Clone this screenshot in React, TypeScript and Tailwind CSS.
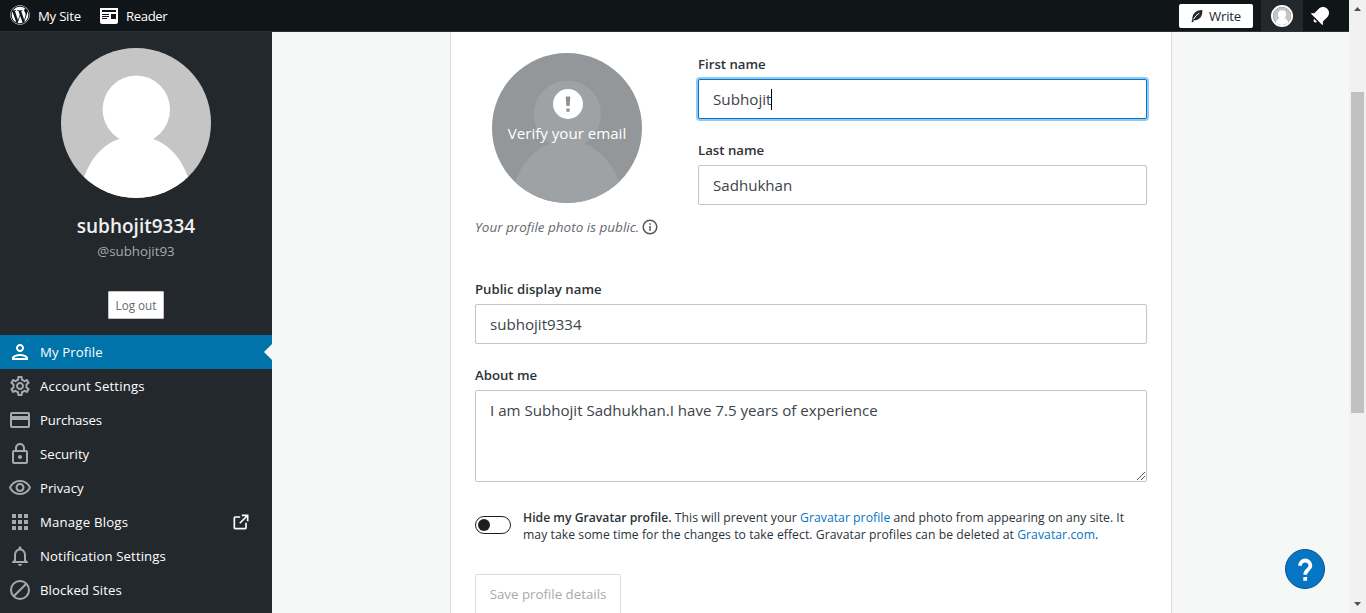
import React from "react";
import { FaWordpress } from "react-icons/fa";
import { MdOutlinePerson, MdOutlineSettings, MdOutlineLock, MdOutlineVisibility, MdApps, MdNotificationsNone } from "react-icons/md";

const CreditCard = () => (
  <svg viewBox="0 0 24 24" className="size-6" fill="currentColor">
    <path fillRule="evenodd" d="M4 4h16a2 2 0 0 1 2 2v12a2 2 0 0 1-2 2H4a2 2 0 0 1-2-2V6c0-1.100.9-2 2-2zm0 2h16v2H4zm0 6h16v6H4z" />
  </svg>
);

const Blocked = () => (
  <svg viewBox="0 0 24 24" className="size-6" fill="none" stroke="currentColor" strokeWidth="2">
    <circle cx="12" cy="12" r="9" />
    <path d="M5.700 18.300l12.600-12.600" />
  </svg>
);

const External = () => (
  <svg viewBox="0 0 24 24" className="size-5" fill="currentColor">
    <path d="M19 13v6c0 1.105-.895 2-2 2H5c-1.105 0-2-.895-2-2V7c0-1.105.895-2 2-2h6v2H5v12h12v-6h2zM13 3v2h4.586l-7.793 7.793 1.414 1.414L19 6.414V11h2V3h-8z" />
  </svg>
);

const Reader = () => (
  <svg viewBox="0 0 24 24" className="size-6" fill="currentColor">
    <path d="M3 4v14c0 1.100.9 2 2 2h14c1.100 0 2-.9 2-2V4H3zm7 11H5v-1h5v1zm2-2H5v-1h7v1zm0-2H5v-1h7v1zm7 4h-5v-5h5v5zm0-7H5V6h14v2z" />
  </svg>
);

const Quill = () => (
  <svg viewBox="0 0 12 14" className="h-[14px] w-3" fill="none">
    <path d="M11.300.9C6.500.7 1.200 3.700 1.300 10L.5 13l1.600.2.500-1.900C8.300 11.300 11.800 7.500 11.300.9Z" fill="#23282d" />
    <path d="M2.500 10.300Q4.500 6.500 8.300 4" stroke="#fff" strokeWidth="1" />
  </svg>
);

const Bell = () => (
  <svg viewBox="0 0 24 24" className="size-6" fill="#fff">
    <path d="M6.140 14.970l2.828 2.827c-.362.362-.862.586-1.414.586-1.105 0-2-.895-2-2 0-.552.224-1.052.586-1.413zm8.867 5.324L14.300 21 3 9.700l.706-.707 1.102.157c.754.108 1.690-.122 2.077-.510l3.885-3.884c2.340-2.340 6.135-2.340 8.475 0s2.340 6.135 0 8.475l-3.885 3.886c-.388.388-.618 1.323-.510 2.077l.157 1.100z" />
  </svg>
);

const Avatar = ({ className, back = "#c5c5c5", front = "#fff" }: { className: string; back?: string; front?: string }) => (
  <svg viewBox="0 0 150 150" className={className}>
    <defs>
      <clipPath id="avatar-clip"><circle cx="75" cy="75" r="75" /></clipPath>
    </defs>
    <g clipPath="url(#avatar-clip)">
      <rect width="150" height="150" fill={back} />
      <ellipse cx="75.300" cy="61.500" rx="33.700" ry="34" fill={front} />
      <path d="M20 150V140C27 108 48 88 75 88S123 108 130 140V150Z" fill={front} />
    </g>
  </svg>
);

const items = [
  { label: "My Profile", icon: <MdOutlinePerson size={24} />, track: "tracking-[0.1px]" },
  { label: "Account Settings", icon: <MdOutlineSettings size={24} />, track: "tracking-[0.16px]" },
  { label: "Purchases", icon: <CreditCard />, track: "tracking-[-0.15px]" },
  { label: "Security", icon: <MdOutlineLock size={24} />, track: "tracking-[0.02px]" },
  { label: "Privacy", icon: <MdOutlineVisibility size={24} />, track: "tracking-[0.02px]" },
  { label: "Manage Blogs", icon: <MdApps size={24} />, track: "tracking-[0.19px]" },
  { label: "Notification Settings", icon: <MdNotificationsNone size={24} />, track: "tracking-[0.11px]" },
  { label: "Blocked Sites", icon: <Blocked />, track: "tracking-[0.07px]" },
];

const labelCls = "block h-[21px] pt-px text-[13.200px] leading-[21px] font-semibold text-[#2c3338]";
const fieldCls = "flex h-10 items-center rounded-[2px] border border-[#c3c4c7] bg-white px-[14px] text-[15.100px] text-[#3c434a]";

function Masterbar() {
  return (
    <header className="flex h-8 shrink-0 items-center border-b border-[#2c3338] bg-[#101517] text-[13.200px] text-white">
      <div className="flex w-[97px] items-center pl-[10px]">
        <FaWordpress size={20} />
        <span className="ml-2 pt-[2px] tracking-[-0.25px]">My Site</span>
      </div>
      <div className="flex items-center gap-[5px]">
        <Reader />
        <span className="pt-[2px] tracking-[-0.4px]">Reader</span>
      </div>
      <div className="ml-auto flex h-full items-center">
        <div className="mr-2 flex h-6 w-[74px] items-center rounded-[2px] bg-white pl-3 text-[#23282d]">
          <Quill />
          <span className="ml-[6px] pt-[2px] tracking-[-0.2px]">Write</span>
        </div>
        <div className="flex h-full w-[42px] items-center justify-center bg-[#23282d]">
          <div className="size-[22px] rounded-full border-2 border-white"><Avatar className="size-full" /></div>
        </div>
        <div className="flex w-[46px] pt-px pl-[5px]"><Bell /></div>
      </div>
    </header>
  );
}

function Sidebar() {
  return (
    <aside className="flex w-[272px] shrink-0 flex-col bg-[#23282d]">
      <div className="flex h-[303px] shrink-0 flex-col items-center pt-4">
        <Avatar className="size-[150px]" />
        <div className="mt-[13px] h-[30px] text-[19px] leading-[30px] font-semibold text-[#f0f0f1]">subhojit9334</div>
        <div className="h-5 text-[13.300px] leading-5 text-[#a2aab2]">@subhojit93</div>
        <button className="mt-[30px] h-7 w-14 rounded-[1px] border border-[#c3c4c7] bg-white pt-px text-[11.700px] text-[#646970]">Log out</button>
      </div>
      <nav>
        {items.map((it, i) => (
          <div key={it.label} className={i === 0 ? "flex h-[34px] items-center bg-[#0073aa] pl-2 text-white" : "flex h-[34px] items-center pl-2 text-[#a2aab2]"}>
            {it.icon}
            <span className={"ml-2 pt-[2px] text-[13.200px] text-white " + it.track}>{it.label}</span>
            {i === 0 && (
              <svg viewBox="0 0 8 16" className="ml-auto h-4 w-2" fill="#f6f7f7"><path d="M8 0L0 8l8 8z" /></svg>
            )}
            {i === 5 && <span className="mr-[21px] ml-auto text-white"><External /></span>}
          </div>
        ))}
      </nav>
    </aside>
  );
}

function ProfileForm() {
  return (
    <main className="flex h-full w-[722px] flex-col border-x border-[#dcdcde] bg-white px-6 text-[#2c3338]">
      <div className="flex h-[246px] shrink-0 pt-[21px]">
        <div className="flex w-[223px] flex-col">
          <div className="relative ml-[17px] size-[150px]">
            <Avatar className="size-[150px]" back="#949799" front="#9fa2a4" />
            <div className="absolute inset-0 flex flex-col items-center pt-[36px] text-white">
              <svg viewBox="0 0 30 30" className="ml-[2px] size-[30px]">
                <circle cx="15" cy="15" r="15" fill="#fff" />
                <path d="M12.700 7.500h4.600l-.7 9.500h-3.200zM13.400 19.500h3.200v3.200h-3.200z" fill="#8c9092" />
              </svg>
              <span className="pt-px text-[15.100px] leading-[27px] whitespace-nowrap">Verify your email</span>
            </div>
          </div>
          <div className="mt-[14px] flex h-5 items-center text-[13.500px] text-[#646970] italic">
            <span className="w-[166px] pt-px whitespace-nowrap">Your profile photo is public.</span>
            <svg viewBox="0 0 18 18" className="size-[18px]">
              <circle cx="9" cy="9" r="6.800" fill="none" stroke="#50575e" strokeWidth="1.500" />
              <path d="M8.300 5.200h1.500v1.500H8.300zM8.300 8h1.500v4.800H8.300z" fill="#50575e" />
            </svg>
          </div>
        </div>
        <div className="w-[449px]">
          <label className={labelCls}>First name</label>
          <div className="mt-[5px] flex h-10 items-center rounded-[2px] border border-[#0675c4] bg-white px-[14px] text-[15.200px] text-[#3c434a] shadow-[0_0_0_2px_#91caf2]">
            Subhojit<span className="h-[21px] w-px bg-black" />
          </div>
          <label className={labelCls + " mt-5"}>Last name</label>
          <div className={fieldCls + " mt-[5px]"}>Sadhukhan</div>
        </div>
      </div>
      <label className={labelCls}>Public display name</label>
      <div className={fieldCls + " mt-[5px] shrink-0"}>subhojit9334</div>
      <label className={labelCls + " mt-5"}>About me</label>
      <div className="mt-[5px] flex h-[92px] shrink-0 items-end justify-between rounded-[2px] border border-[#c3c4c7] pl-[14px] text-[15.100px] leading-6 text-[#3c434a]">
        <span className="mt-[7px] self-start">I am Subhojit Sadhukhan.I have 7.5 years of experience</span>
        <svg viewBox="0 0 10 10" className="size-[10px]" stroke="#50575e" strokeWidth="1"><path d="M1 9l8-8M5 9l4-4" /></svg>
      </div>
      <div className="mt-[27px] flex h-[34px] shrink-0 items-start">
        <div className="mt-[7px] flex h-[18px] w-9 shrink-0 items-center rounded-full border border-[#1e1e1e] pl-[2px]">
          <span className="size-3 rounded-full bg-[#1e1e1e]" />
        </div>
        <p className="ml-3 text-[12.200px] leading-[17px] whitespace-nowrap">
          <span className="font-semibold">Hide my Gravatar profile.</span> <span className="tracking-[0.04px]">This will prevent your <a className="text-[#0675c4]">Gravatar profile</a> and photo from appearing on any site. It</span>
          <br />
          <span className="tracking-[0.05px]">may take some time for the changes to take effect. Gravatar profiles can be deleted at <a className="text-[#0675c4]">Gravatar.com</a>.</span>
        </p>
      </div>
      <button className="mt-[31px] h-[42px] w-[146px] shrink-0 rounded-[2px] border border-[#dcdcde] text-[13.300px] text-[#a7aaad]">Save profile details</button>
    </main>
  );
}

export default function App() {
  return (
    <div className="flex h-[613px] w-[1366px] overflow-hidden bg-[#f6f7f7] font-['Open_Sans','Noto_Sans',sans-serif]">
      <div className="relative flex w-[1349px] flex-col">
        <Masterbar />
        <div className="flex h-[581px]">
          <Sidebar />
          <div className="flex flex-1 pl-[178px]"><ProfileForm /></div>
        </div>
        <div className="absolute top-[549px] left-[1285px] flex size-10 items-center justify-center rounded-full border border-[#04598f] bg-[#0675c4]">
          <svg viewBox="0 0 38 38" className="size-[38px]" fill="none" stroke="#fff" strokeWidth="3.800">
            <path d="M14 15.700a5.200 5.200 0 1 1 10.400 0c0 3.900-5.200 4-5.200 9.100" />
            <path d="M17.300 28.900h3.800" />
          </svg>
        </div>
      </div>
      <div className="flex w-[17px] flex-col items-center justify-between bg-[#f1f1f1]">
        <svg viewBox="0 0 17 17" className="size-[17px]" fill="#505050"><path d="M5 11l3.500-4 3.500 4z" /></svg>
        <div className="mt-[75px] mb-auto h-[321px] w-[13px] bg-[#c1c1c1]" />
        <svg viewBox="0 0 17 17" className="size-[17px]" fill="#505050"><path d="M5 6l3.500 4L12 6z" /></svg>
      </div>
    </div>
  );
}
